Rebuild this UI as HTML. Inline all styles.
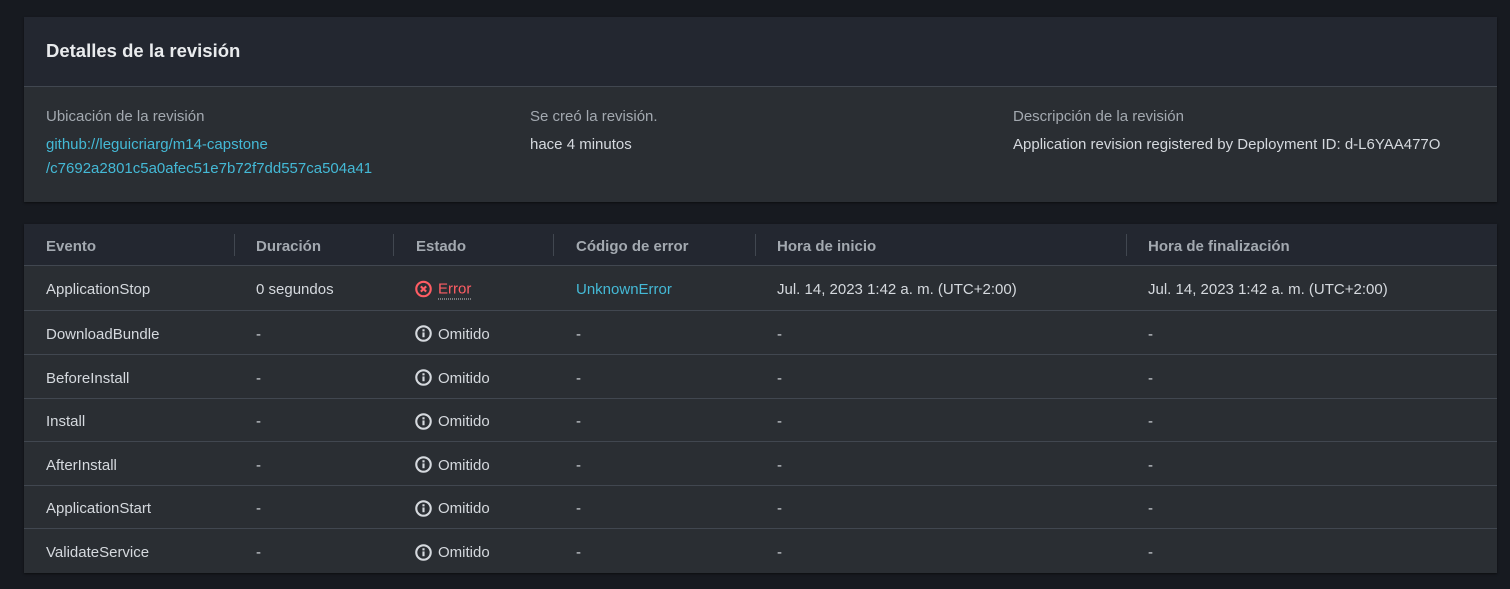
<!DOCTYPE html>
<html><head><meta charset="utf-8"><style>
*{box-sizing:border-box;margin:0;padding:0}
body{width:1510px;height:589px;background:#171a20;font-family:"Liberation Sans",sans-serif;font-size:15px;color:#d5d9de;position:relative;overflow:hidden}
.card{position:absolute;left:24px;width:1473px;background:#2a2e33;box-shadow:0 1px 2px rgba(0,0,0,.5)}
.c1{top:17px;height:185px}
.c1 .hd{height:70px;background:#232730;border-bottom:1px solid #414750;padding:23px 22px;font-weight:bold;font-size:18.5px;color:#e9ebed}
.col{position:absolute;top:91px}
.lbl{color:#a3a9b0;margin-bottom:8px}
.lnk{color:#44b9d6;line-height:24px}
.c2{top:224px;height:349px}
.tr{position:absolute;left:0;width:100%;height:44px;border-bottom:1px solid #414750}
.tr.h{height:42px;background:#232730;font-weight:bold;color:#a3a9b0}
.td{position:absolute;top:calc(50% + 2px);transform:translateY(-50%);white-space:nowrap;line-height:20px}
.sep{position:absolute;top:10px;height:22px;width:1px;background:#414750}
.st{display:flex;align-items:center;gap:6px;top:calc(50% + 1px)}
.st svg{display:block}
.st span,.st b{font-weight:normal;position:relative;top:1px}
.err{color:#ff5d64;border-bottom:1px dotted #ccc;line-height:18px}
</style></head><body>
<div class="card c1">
<div class="hd">Detalles de la revisión</div>
<div class="col" style="left:22px"><div class="lbl">Ubicación de la revisión</div><div class="lnk">github://leguicriarg/m14-capstone<br>/c7692a2801c5a0afec51e7b72f7dd557ca504a41</div></div>
<div class="col" style="left:506px"><div class="lbl">Se creó la revisión.</div><div style="line-height:24px">hace 4 minutos</div></div>
<div class="col" style="left:989px"><div class="lbl">Descripción de la revisión</div><div style="line-height:24px">Application revision registered by Deployment ID: d-L6YAA477O</div></div>
</div>
<div class="card c2">
<div class="tr h" style="top:0">
<span class="td" style="left:22px">Evento</span><i class="sep" style="left:210px"></i>
<span class="td" style="left:232px">Duración</span><i class="sep" style="left:369px"></i>
<span class="td" style="left:392px">Estado</span><i class="sep" style="left:529px"></i>
<span class="td" style="left:552px">Código de error</span><i class="sep" style="left:731px"></i>
<span class="td" style="left:753px">Hora de inicio</span><i class="sep" style="left:1102px"></i>
<span class="td" style="left:1124px">Hora de finalización</span>
</div>
<div class="tr" style="top:42px;height:45px">
<span class="td" style="left:22px">ApplicationStop</span>
<span class="td" style="left:232px">0 segundos</span>
<span class="td st" style="left:391px"><svg width="17" height="17" viewBox="0 0 16 16"><circle cx="8" cy="8" r="6.8" fill="none" stroke="#ff5d64" stroke-width="2"/><path d="M5.5 5.5l5 5M10.5 5.5l-5 5" stroke="#ff5d64" stroke-width="2"/></svg><span class="err">Error</span></span>
<span class="td" style="left:552px;color:#44b9d6">UnknownError</span>
<span class="td" style="left:753px">Jul. 14, 2023 1:42 a. m. (UTC+2:00)</span>
<span class="td" style="left:1124px">Jul. 14, 2023 1:42 a. m. (UTC+2:00)</span>
</div>
<div id="rows"></div>
</div>
<script>
var n=["DownloadBundle","BeforeInstall","Install","AfterInstall","ApplicationStart","ValidateService"],t=[87,131,175,218,262,305],h="";
n.forEach(function(x,i){h+='<div class="tr" style="top:'+t[i]+'px;height:'+((i<5?t[i+1]:349)-t[i])+'px;'+(i==5?'border:none':'')+'"><span class="td" style="left:22px">'+x+'</span><span class="td" style="left:232px">-</span><span class="td st" style="left:391px"><svg width="17" height="17" viewBox="0 0 16 16"><circle cx="8" cy="8" r="6.8" fill="none" stroke="#d5d9de" stroke-width="2"/><rect x="7" y="7" width="2" height="4.5" fill="#d5d9de"/><rect x="7" y="4" width="2" height="2" fill="#d5d9de"/></svg><span>Omitido</span></span><span class="td" style="left:552px">-</span><span class="td" style="left:753px">-</span><span class="td" style="left:1124px">-</span></div>'});
document.getElementById("rows").outerHTML=h;
</script>
</body></html>
